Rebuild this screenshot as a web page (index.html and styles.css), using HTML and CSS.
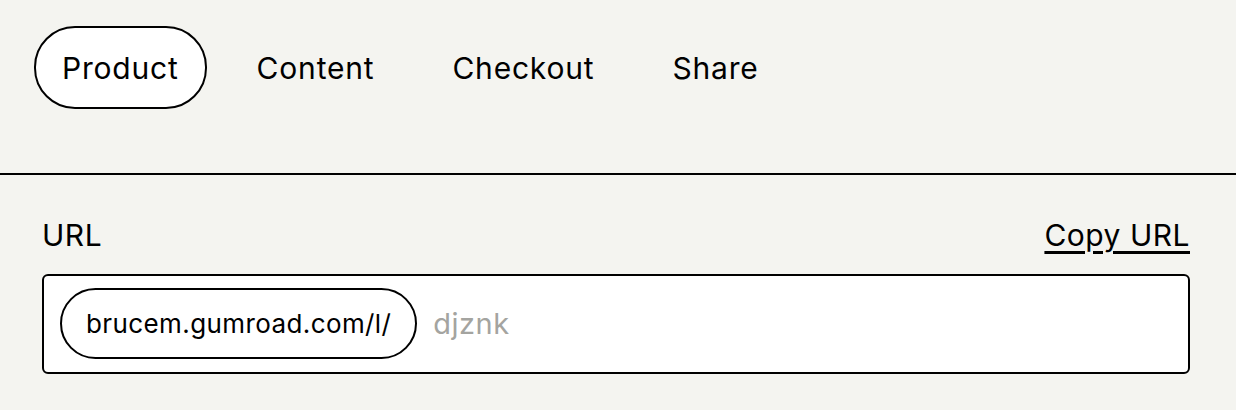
FILE: index.html
```html
<!DOCTYPE html>
<html lang="en">
<head>
  <meta charset="UTF-8">
  <meta name="viewport" content="width=device-width, initial-scale=1.0">
  <title>Edit product</title>
  <link rel="stylesheet" href="styles.css">
</head>
<body>
  <nav class="tabs">
    <a class="tab active" href="#">Product</a>
    <a class="tab" href="#">Content</a>
    <a class="tab" href="#">Checkout</a>
    <a class="tab" href="#">Share</a>
  </nav>

  <section class="field">
    <div class="field-head">
      <label for="permalink">URL</label>
      <a class="copy-link" href="#">Copy URL</a>
    </div>
    <div class="input">
      <span class="prefix">brucem.gumroad.com/l/</span>
      <input id="permalink" type="text" placeholder="djznk">
    </div>
  </section>
</body>
</html>
```

FILE: styles.css
```css
body {
  margin: 0;
  background-color: #f4f4f0;
  font-family: 'Inter', 'Liberation Sans', sans-serif;
  color: #000;
}

.tabs {
  display: flex;
  gap: 22px;
  padding: 26px 34px 64px;
  border-bottom: 2px solid #000;
}

.tab {
  padding: 20px 26px 18px;
  border: 2px solid transparent;
  border-radius: 41px;
  font-size: 30px;
  line-height: 41px;
  letter-spacing: 0.8px;
  color: #000;
  text-decoration: none;
}

.tab.active {
  background: #fff;
  border-color: #000;
}

.field {
  padding: 39px 46px 36px 42px;
}

.field-head {
  display: flex;
  justify-content: space-between;
  align-items: baseline;
  font-size: 30px;
  line-height: 42px;
  letter-spacing: 0.5px;
  margin-bottom: 18px;
}

.copy-link {
  color: #000;
  text-decoration: underline;
  text-underline-offset: 5px;
}

.input {
  display: flex;
  align-items: center;
  gap: 16px;
  background: #fff;
  border: 2px solid #000;
  border-radius: 6px;
  padding: 12px 16px 13px;
}

.prefix {
  padding: 0 24px;
  border: 2px solid #000;
  border-radius: 40px;
  font-size: 26px;
  line-height: 67px;
  letter-spacing: 0.4px;
}

.input input {
  flex: 1;
  border: 0;
  outline: 0;
  padding: 0;
  background: transparent;
  font-family: inherit;
  font-size: 29px;
  letter-spacing: 0.5px;
}

.input input::placeholder {
  color: #a4a4a0;
}
```
